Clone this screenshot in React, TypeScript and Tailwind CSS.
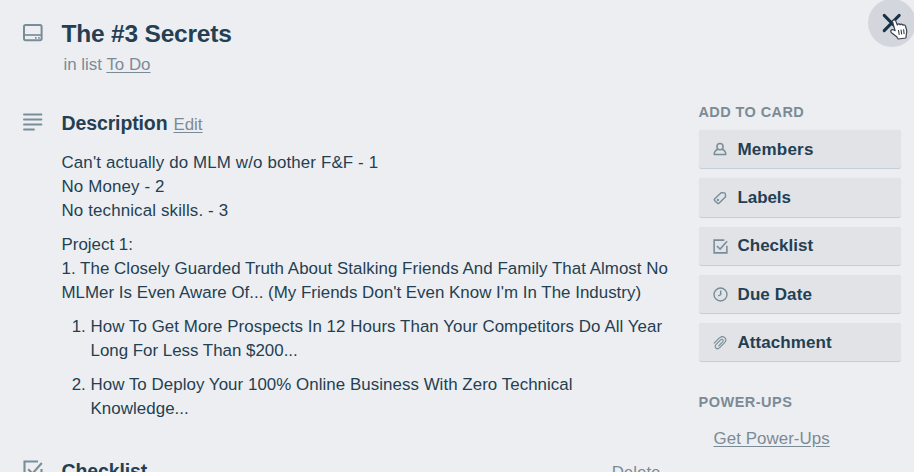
import type { ReactNode } from 'react';

interface SidebarButtonProps {
  icon: ReactNode;
  label: string;
  textClass: string;
}

function CardIcon() {
  return (
    <svg width="20" height="18" viewBox="0 0 20 18" fill="none" stroke="#798d99">
      <rect x="1" y="1" width="17.6" height="15.2" rx="1.6" strokeWidth="2" />
      <path d="M1 11h18" strokeWidth="1.7" />
      <path d="M12 13.8h1.6M15.2 13.8h1.6" strokeWidth="1.8" />
    </svg>
  );
}

function DescriptionIcon() {
  return (
    <svg width="20" height="18" viewBox="0 0 20 18" stroke="#798d99" strokeWidth="1.9" strokeLinecap="round">
      <path d="M1 1.5h17.4M1 6.5h17.4M1 11.5h17.4M1 16.5h10" />
    </svg>
  );
}

function CheckIcon({ size }: { size: number }) {
  return (
    <svg width={size} height={size} viewBox="0 0 20 20" fill="none" stroke="#798d99" strokeWidth="2.1">
      <path d="M15 1.5H1.5v17h17V9" />
      <path d="M5.2 9.3l4.3 4.2L18.8 3" />
    </svg>
  );
}

function MemberIcon() {
  return (
    <svg width="14" height="15" viewBox="0 0 14 15" fill="none" stroke="#798d99" strokeWidth="1.5">
      <circle cx="7" cy="4.7" r="3.1" />
      <path d="M4.9 7.3C2.5 8.3 1.2 10 1.2 12.6h11.6c0-2.6-1.3-4.3-3.7-5.3" strokeLinejoin="round" />
    </svg>
  );
}

function LabelIcon() {
  return (
    <svg width="14" height="14" viewBox="0 0 14 14" fill="none" stroke="#798d99" strokeWidth="1.4">
      <path d="M8.4 1.6l3 .3c.5.1.8.4.9.9l.3 2.9-6.1 6.1c-.8.8-1.8.8-2.6 0L2 9.9c-.8-.8-.8-1.7 0-2.5z" strokeLinejoin="round" />
      <circle cx="4.9" cy="9" r=".5" />
    </svg>
  );
}

function ClockIcon() {
  return (
    <svg width="15" height="15" viewBox="0 0 15 15" fill="none" stroke="#798d99" strokeWidth="1.4">
      <circle cx="7.5" cy="7.5" r="6.5" />
      <path d="M7.7 3.4v4.3L5.2 9" />
    </svg>
  );
}

function ClipIcon() {
  return (
    <svg width="14" height="14" viewBox="0 0 14 14" fill="none" stroke="#798d99" strokeWidth="1.15" strokeLinecap="round">
      <path d="M1.2 7.1l4.7-4.7C8.3 0 10.6.5 11.8 1.7c1.3 1.3 1.4 3.3-.4 5.1l-4.8 4.9c-1.2 1.2-2.8 1.2-3.7.3-1-1-.9-2.5.2-3.6l4.5-4.5c.8-.8 1.6-.8 2.2-.2.6.6.5 1.5-.2 2.2L5.7 9.8" />
    </svg>
  );
}

function SidebarButton({ icon, label, textClass }: SidebarButtonProps) {
  return (
    <button className="flex h-[39.3px] w-full items-center rounded-[3px] border-b border-[#c3cddc] bg-[#e1e3e7] pt-[1px] pl-[14px] text-left shadow-[0_0_1px_#d5dae0]">
      <span className="flex w-[15px] justify-center">{icon}</span>
      <span className={`ml-[10px] text-[17px] leading-6 font-bold ${textClass}`}>{label}</span>
    </button>
  );
}

const actions: SidebarButtonProps[] = [
  { icon: <MemberIcon />, label: 'Members', textClass: 'tracking-[0.2px]' },
  { icon: <LabelIcon />, label: 'Labels', textClass: 'tracking-[-0.1px]' },
  { icon: <CheckIcon size={15} />, label: 'Checklist', textClass: 'tracking-[0px]' },
  { icon: <ClockIcon />, label: 'Due Date', textClass: 'tracking-[0.1px]' },
  { icon: <ClipIcon />, label: 'Attachment', textClass: 'tracking-[0.07px]' },
];

export default function App() {
  return (
    <div className="relative flex h-[472px] w-[914px] overflow-hidden bg-[#edeef1] font-['Liberation_Sans',Arial,sans-serif] text-[#243f52]">
      <main className="w-[698.5px] shrink-0 pl-[22.5px]">
        <header className="flex pt-[19px]">
          <div className="w-[39px] shrink-0 pt-[5px]">
            <CardIcon />
          </div>
          <div>
            <h1 className="text-[24.5px] leading-[30px] font-bold tracking-[-0.2px] whitespace-nowrap">The #3 Secrets</h1>
            <p className="pt-[4px] pl-[2px] text-[16.9px] leading-6 text-[#7b8b96]">
              in list <a className="underline underline-offset-2">To Do</a>
            </p>
          </div>
        </header>

        <section className="mt-[34px] flex">
          <div className="w-[39px] shrink-0 pt-[2px]">
            <DescriptionIcon />
          </div>
          <div className="text-[16.9px] leading-6 whitespace-nowrap">
            <div className="flex h-6 items-baseline gap-[6px]">
              <h2 className="text-[19.5px] font-bold tracking-[-0.12px]">Description</h2>
              <a className="text-[#7b8b96] underline underline-offset-2">Edit</a>
            </div>
            <div className="mt-[16px]">
              <p className="tracking-[0.14px]">
                Can't actually do MLM w/o bother F&amp;F - 1<br />
                No Money - 2<br />
                No technical skills. - 3
              </p>
              <p className="mt-[10px]">
                Project 1:<br />
                <span className="tracking-[0.045px]">
                  1. The Closely Guarded Truth About Stalking Friends And Family That Almost No
                </span>
                <br />
                <span className="tracking-[0.015px]">
                  MLMer Is Even Aware Of... (My Friends Don't Even Know I'm In The Industry)
                </span>
              </p>
              <ol className="mt-[10px] list-decimal space-y-[10px] pl-[29px]">
                <li>
                  <span className="tracking-[0.06px]">
                    How To Get More Prospects In 12 Hours Than Your Competitors Do All Year
                  </span>
                  <br />
                  Long For Less Than $200...
                </li>
                <li>
                  <span className="tracking-[0.05px]">How To Deploy Your 100% Online Business With Zero Technical</span>
                  <br />
                  <span className="tracking-[0.06px]">Knowledge...</span>
                </li>
              </ol>
            </div>
          </div>
        </section>

        <section className="mt-[38px] flex">
          <div className="w-[39px] shrink-0 pt-[1px]">
            <CheckIcon size={20} />
          </div>
          <div className="flex w-[599px] items-baseline justify-between">
            <h2 className="text-[19.5px] leading-6 font-bold tracking-[-0.12px]">Checklist</h2>
            <a className="text-[16.9px] leading-6 text-[#7b8b96] underline underline-offset-2">Delete</a>
          </div>
        </section>
      </main>

      <aside className="w-[202.5px] shrink-0 pt-[102px]">
        <h3 className="text-[14.5px] leading-5 font-bold tracking-[0.4px] text-[#7b8b96]">ADD TO CARD</h3>
        <div className="mt-[8px] flex flex-col gap-[9px]">
          {actions.map((action) => (
            <SidebarButton key={action.label} {...action} />
          ))}
        </div>
        <h3 className="mt-[30px] text-[14.5px] leading-5 font-bold tracking-[0.5px] text-[#7b8b96]">POWER-UPS</h3>
        <a className="mt-[15px] ml-[15px] inline-block text-[16.9px] leading-6 tracking-[0.06px] text-[#7b8b96] underline underline-offset-2">
          Get Power-Ups
        </a>
      </aside>

      <button className="absolute -top-px left-[868px] h-12 w-12 rounded-full bg-[#d3d7dd]" aria-label="Close">
        <svg className="absolute top-0 left-0" width="48" height="48" viewBox="0 0 48 48" fill="none">
          <path d="M16.2 16.4l15 15.2M31.2 16.4l-15 15.2" stroke="#173247" strokeWidth="3" strokeLinecap="round" />
          <path
            d="M24.6 23c-.5-2.2 2.5-3 3.2-.9l1.5 3.9c.4-1.3 2.4-1.4 2.8-.2.7-1 2.3-.8 2.8.4 1-.7 2.4-.1 2.7 1.1l1 3.7c.4 1.6.2 3-.3 4.3l-.4 3.7-7.7 1-1.8-2.6-4.9-3.7c-1.7-1.4-.2-3.8 1.8-2.9l1.8.9z"
            fill="#fff"
            stroke="#36404a"
            strokeWidth="1.2"
            strokeLinejoin="round"
          />
          <path d="M30.4 31l.9 4.8M33 30.6l.7 4.8M35.6 30.2l.5 4.8" stroke="#36404a" strokeWidth="1.1" />
        </svg>
      </button>
    </div>
  );
}
